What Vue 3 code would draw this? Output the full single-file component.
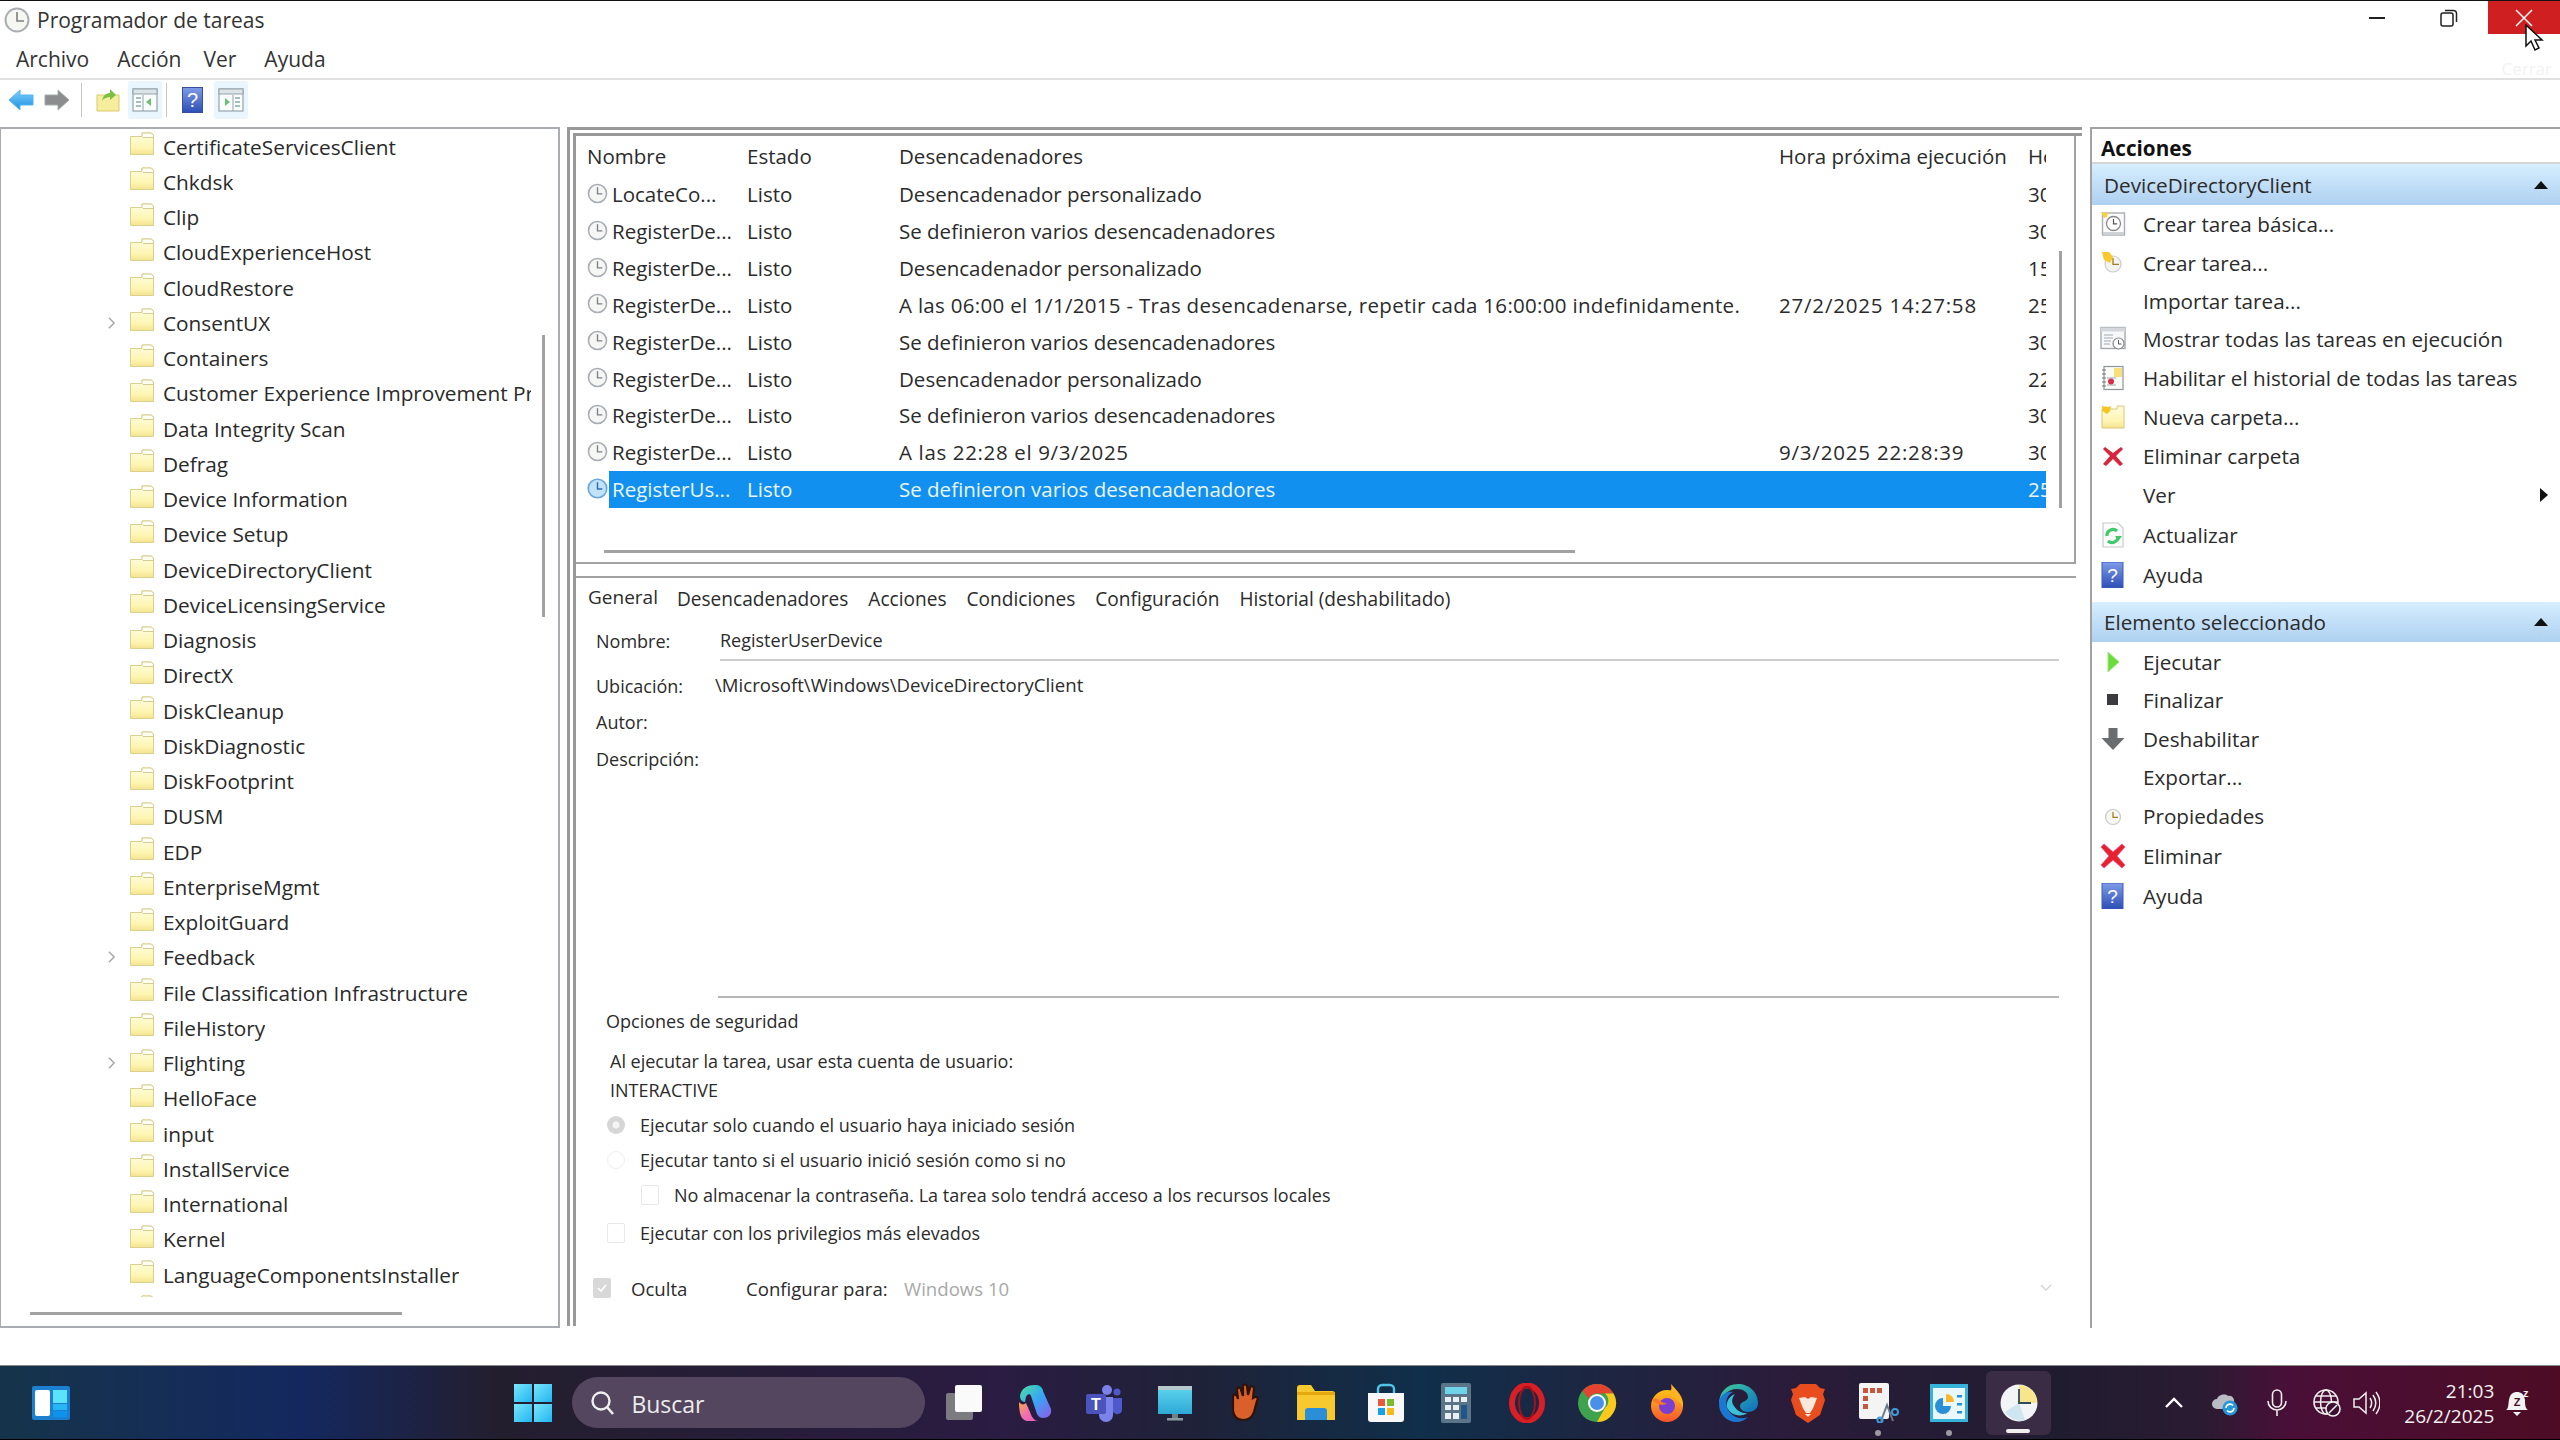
<script setup>
const tree = [
  ['CertificateServicesClient'], ['Chkdsk'], ['Clip'], ['CloudExperienceHost'], ['CloudRestore'], ['ConsentUX', 1], ['Containers'],
  ['Customer Experience Improvement Pr'], ['Data Integrity Scan'], ['Defrag'], ['Device Information'], ['Device Setup'],
  ['DeviceDirectoryClient'], ['DeviceLicensingService'], ['Diagnosis'], ['DirectX'], ['DiskCleanup'], ['DiskDiagnostic'],
  ['DiskFootprint'], ['DUSM'], ['EDP'], ['EnterpriseMgmt'], ['ExploitGuard'], ['Feedback', 1], ['File Classification Infrastructure'],
  ['FileHistory'], ['Flighting', 1], ['HelloFace'], ['input'], ['InstallService'], ['International'], ['Kernel'],
  ['LanguageComponentsInstaller'], ['']
]
const varios = 'Se definieron varios desencadenadores'
const custom = 'Desencadenador personalizado'
const rows = [
  ['LocateCo...', custom, '', '30', ''],
  ['RegisterDe...', varios, '', '30', ''],
  ['RegisterDe...', custom, '', '15', ''],
  ['RegisterDe...', 'A las 06:00 el 1/1/2015 - Tras desencadenarse, repetir cada 16:00:00 indefinidamente.', '27/2/2025 14:27:58', '25', 'long'],
  ['RegisterDe...', varios, '', '30', ''],
  ['RegisterDe...', custom, '', '22', ''],
  ['RegisterDe...', varios, '', '30', ''],
  ['RegisterDe...', 'A las 22:28 el 9/3/2025', '9/3/2025 22:28:39', '30', 'short'],
  ['RegisterUs...', varios, '', '25', '']
]
const tabs = ['Desencadenadores', 'Acciones', 'Condiciones', 'Configuración', 'Historial (deshabilitado)']
const actions1 = [
  { t: 'Crear tarea básica...', i: 'a-basic', h: 38 },
  { t: 'Crear tarea...', i: 'a-create', h: 39 },
  { t: 'Importar tarea...', h: 38 },
  { t: 'Mostrar todas las tareas en ejecución', i: 'a-running', h: 38 },
  { t: 'Habilitar el historial de todas las tareas', i: 'a-history', h: 39 },
  { t: 'Nueva carpeta...', i: 'a-newfolder', h: 39 },
  { t: 'Eliminar carpeta', i: 'a-x', h: 39 },
  { t: 'Ver', arrow: true, h: 40 },
  { t: 'Actualizar', i: 'a-refresh', h: 40 },
  { t: 'Ayuda', i: 'a-help', h: 40 }
]
const actions2 = [
  { t: 'Ejecutar', i: 'a-play', h: 39 },
  { t: 'Finalizar', i: 'a-stop', h: 38 },
  { t: 'Deshabilitar', i: 'a-down', h: 39 },
  { t: 'Exportar...', h: 38 },
  { t: 'Propiedades', i: 'a-props', h: 40 },
  { t: 'Eliminar', i: 'a-xbig', h: 40 },
  { t: 'Ayuda', i: 'a-help', h: 40 }
]
</script>

<template>
  <div class="screen">
    <svg class="defs" width="0" height="0">
      <defs>
        <linearGradient id="gf" x1="0" y1="0" x2="0" y2="1"><stop offset="0" stop-color="#fffde0" /><stop offset=".7" stop-color="#fdf5b0" /><stop offset="1" stop-color="#f3e390" /></linearGradient>
        <linearGradient id="gs" x1="0" y1="0" x2="1" y2="1"><stop offset="0" stop-color="#7be6fb" /><stop offset="1" stop-color="#1fb5f2" /></linearGradient>
        <linearGradient id="gb" x1="0" y1="0" x2="0" y2="1"><stop offset="0" stop-color="#7fd0ff" /><stop offset="1" stop-color="#1f8fe0" /></linearGradient>
        <linearGradient id="gm" x1="0" y1="0" x2="0" y2="1"><stop offset="0" stop-color="#5fd7ef" /><stop offset="1" stop-color="#2ea8d6" /></linearGradient>
        <linearGradient id="gh" x1="0" y1="0" x2="0" y2="1"><stop offset="0" stop-color="#7f9be8" /><stop offset="1" stop-color="#2d4fb5" /></linearGradient>
        <linearGradient id="gc1" x1="0" y1="0" x2="1" y2="1"><stop offset="0" stop-color="#4de0a0" /><stop offset=".5" stop-color="#38a5f5" /><stop offset="1" stop-color="#8f5be8" /></linearGradient>
        <linearGradient id="gc2" x1="0" y1="0" x2="1" y2="1"><stop offset="0" stop-color="#f9b03f" /><stop offset=".5" stop-color="#f070b0" /><stop offset="1" stop-color="#e85ac0" /></linearGradient>
        <linearGradient id="gff" x1="0" y1="0" x2="0" y2="1"><stop offset="0" stop-color="#ffc21a" /><stop offset="1" stop-color="#f5532d" /></linearGradient>
        <linearGradient id="ge" x1="0" y1="0" x2="1" y2="1"><stop offset="0" stop-color="#3ecf9b" /><stop offset="1" stop-color="#0c6cc4" /></linearGradient>
        <symbol id="clk" viewBox="0 0 20 20"><circle cx="10" cy="10" r="8.6" fill="#f6f6f4" stroke="#a8adb4" stroke-width="1.5" /><path d="M10 4v6.4h4.6" fill="none" stroke="#7c8088" stroke-width="1.3" /></symbol>
        <symbol id="clk-sel" viewBox="0 0 20 20"><circle cx="10" cy="10" r="8.8" fill="#c2e2fa" stroke="#6ca8dc" stroke-width="1.6" /><path d="M10 4v6.4h4.6" fill="none" stroke="#2e6fb2" stroke-width="1.4" /></symbol>
        <symbol id="folder" viewBox="0 0 24 23"><path d="M.5 4.500H12V1h9l2.500 2v19.500H.5z" fill="url(#gf)" stroke="#dcd08e" stroke-width="1" /><path d="M12 4.500V1h9l2.500 2v2.500H13" fill="#fffef2" stroke="#d6cb92" stroke-width="1" /></symbol>
        <symbol id="a-basic" viewBox="0 0 26 26"><rect x="2.5" y="2" width="22" height="22" fill="#fbfbfb" stroke="#aaaeb3" stroke-width="1.4" /><circle cx="13.5" cy="12.5" r="7" fill="#fff" stroke="#888" stroke-width="1.3" /><path d="M13.5 8v4.8h3.600" fill="none" stroke="#555" stroke-width="1.2" /><path d="M1 1l5 1 2-1-1 5-3 1z" fill="#f7d23a" /><rect x="3" y="21" width="21" height="2.5" fill="#d0d3d6" /></symbol>
        <symbol id="a-create" viewBox="0 0 26 26"><circle cx="13" cy="14" r="8" fill="#f4f4ee" stroke="#c9cbce" stroke-width="1.2" /><path d="M13 8v6.400h6" fill="none" stroke="#a77b1b" stroke-width="1.3" /><path d="M2 2h7l4 5-3 6-6-3z" fill="#f7c92e" /></symbol>
        <symbol id="a-running" viewBox="0 0 26 26"><rect x="1" y="1.5" width="24" height="21" fill="#f7f8f9" stroke="#9fa5ab" stroke-width="1.3" /><rect x="1" y="1.5" width="24" height="4" fill="#d4d8dc" /><path d="M4 9h9M4 12h9M4 15h7M4 18h6" stroke="#a5aab0" stroke-width="1.2" /><circle cx="18.5" cy="17.5" r="5.5" fill="#fff" stroke="#888" stroke-width="1.2" /><path d="M18.5 14v4h3" fill="none" stroke="#555" stroke-width="1" /></symbol>
        <symbol id="a-history" viewBox="0 0 26 26"><rect x="4" y="1.500" width="19" height="23" fill="#fbfbf7" stroke="#8e959c" stroke-width="1.2" /><path d="M2 5h4M2 9h4M2 13h4M2 17h4M2 21h4" stroke="#777" stroke-width="1.2" /><path d="M14 3h8v9h-8z" fill="#f7e07a" /><path d="M7 13h9M7 20h9" stroke="#9aa" stroke-width="1" /><circle cx="11" cy="16.500" r="3" fill="#d62f4c" /></symbol>
        <symbol id="a-newfolder" viewBox="0 0 26 26"><path d="M2 5h15V2h7v22H2z" fill="url(#gf)" stroke="#d9c877" stroke-width="1" /><path d="M2 2l6 1 3-1-1 5-3 3-5-3z" fill="#f5c623" /></symbol>
        <symbol id="a-x" viewBox="0 0 26 26"><path d="M5 4l8 6 8-6 2 2-7 7 7 8-3 2-7-7-7 7-3-2 7-8-7-7z" fill="#d8243c" /></symbol>
        <symbol id="a-xbig" viewBox="0 0 26 26"><path d="M4 1l9 8 9-8 3 3-8 9 8 9-3 3-9-8-9 8-3-3 8-9-8-9z" fill="#e5232f" stroke="#f38" stroke-width=".6" /></symbol>
        <symbol id="a-refresh" viewBox="0 0 26 26"><path d="M3 1h15l5 5v19H3z" fill="#fbfbfb" stroke="#c7cacc" stroke-width="1.2" /><path d="M7 14a6 6 0 0 1 10-5M18 14a6 6 0 0 1-10 5" fill="none" stroke="#3ec96b" stroke-width="3.200" /><path d="M15 14h7l-3.500 5z" fill="#3ec96b" /></symbol>
        <symbol id="a-help" viewBox="0 0 26 26"><rect x="2" y="0" width="21" height="26" fill="url(#gh)" stroke="#3a5dbd" stroke-width="1" /><text x="12.500" y="20" text-anchor="middle" font-size="19" font-family="Liberation Sans" fill="#fff">?</text></symbol>
        <symbol id="a-play" viewBox="0 0 26 26"><path d="M8 3l11 10-11 10z" fill="#6edb3c" stroke="#9be87a" stroke-width="1" /></symbol>
        <symbol id="a-stop" viewBox="0 0 26 26"><rect x="7" y="7" width="11" height="11" fill="#3b3b3d" /></symbol>
        <symbol id="a-down" viewBox="0 0 26 26"><path d="M8.500 2h9v10h7L13 24 1.500 12h7z" fill="#6a6c6e" /></symbol>
        <symbol id="a-props" viewBox="0 0 26 26"><circle cx="13" cy="14" r="7.500" fill="#f6f6f2" stroke="#c7cacc" stroke-width="1.2" /><path d="M13 9v5.400h5" fill="none" stroke="#a08023" stroke-width="1.300" /></symbol>
      </defs>
    </svg>

    <header class="titlebar">
      <svg class="app-ic" viewBox="0 0 26 26"><circle cx="13" cy="13" r="11.500" fill="#f7f7f2" stroke="#a9adb2" stroke-width="2" /><path d="M13 5v9h7" fill="none" stroke="#7b7f84" stroke-width="1.600" /></svg>
      <span class="title">Programador de tareas</span>
      <div class="wins">
        <span class="win"><i class="min"></i></span>
        <span class="win"><svg viewBox="0 0 18 18" width="18" height="18"><rect x="1" y="4" width="12" height="13" rx="2" fill="none" stroke="#222" stroke-width="1.500" /><path d="M5 1.500h8a3 3 0 0 1 3.500 3V13" fill="none" stroke="#222" stroke-width="1.500" /></svg></span>
        <span class="win close"><svg viewBox="0 0 18 18" width="18" height="18"><path d="M1 1l16 16M17 1L1 17" stroke="#fff" stroke-width="1.500" /></svg></span>
      </div>
      <svg class="cursor" viewBox="0 0 20 28"><path d="M1 1v21l5-5 4 9 4-2-4-8h7z" fill="#fff" stroke="#111" stroke-width="1.500" /></svg>
      <span class="tip">Cerrar</span>
    </header>

    <nav class="menubar">
      <span>Archivo</span><span>Acción</span><span>Ver</span><span>Ayuda</span>
    </nav>

    <div class="toolbar">
      <svg class="tb back" viewBox="0 0 26 24"><path d="M1 12L12 2v5h13v10H12v5z" fill="url(#gb)" stroke="#52b4ef" stroke-width="1" /></svg>
      <svg class="tb fwd" viewBox="0 0 26 24"><path d="M25 12L14 2v5H1v10h13v5z" fill="#8b8d8f" stroke="#a8aaac" stroke-width="1" /></svg>
      <i class="tsep"></i>
      <svg class="tb up" viewBox="0 0 24 24"><path d="M1 7h22v16H1z" fill="#f6ee9c" stroke="#dcc86a" stroke-width="1" /><path d="M6 13C7 7 11 5 14 5V1l6 6-6 5V9c-3 0-6 1-8 4z" fill="#7ac043" /></svg>
      <span class="tbtn t1"><svg viewBox="0 0 26 26" width="26" height="26"><rect x="1" y="2" width="24" height="22" fill="#fbfdfd" stroke="#93a3ab" stroke-width="1.200" /><rect x="1" y="2" width="24" height="5" fill="#dde4e8" stroke="#93a3ab" stroke-width="1" /><path d="M4 11h5M4 15h5M4 19h5" stroke="#8aa" stroke-width="1.400" /><path d="M11 8v16" stroke="#93a3ab" /><path d="M19 11v8l-5-4z" fill="#6cbf73" /></svg></span>
      <i class="tsep s2"></i>
      <svg class="tb help" viewBox="0 0 21 26"><rect x=".5" y=".5" width="20" height="25" fill="url(#gh)" stroke="#35509f" /><text x="10.500" y="20" text-anchor="middle" font-size="20" font-family="Liberation Sans" fill="#fff">?</text></svg>
      <span class="tbtn t2"><svg viewBox="0 0 26 26" width="26" height="26"><rect x="1" y="2" width="24" height="22" fill="#fbfdfd" stroke="#93a3ab" stroke-width="1.200" /><rect x="1" y="2" width="24" height="5" fill="#dde4e8" stroke="#93a3ab" stroke-width="1" /><path d="M17 11h5M17 15h5M17 19h5" stroke="#8aa" stroke-width="1.400" /><path d="M15 8v16" stroke="#93a3ab" /><path d="M7 11v8l5-4z" fill="#6cbf73" /></svg></span>
    </div>

    <main class="main">
      <section class="tree-pane">
        <div class="tree">
          <div v-for="(n, i) in tree" :key="i" class="tree-row">
            <span class="chev"><svg v-if="n[1]" viewBox="0 0 10 16" width="9" height="14"><path d="M2 2l6 6-6 6" fill="none" stroke="#a4a4a4" stroke-width="1.600" /></svg></span>
            <svg class="fold" viewBox="0 0 24 23"><use href="#folder" /></svg>
            <span class="tree-name">{{ n[0] }}</span>
          </div>
        </div>
        <i class="vbar tree-v"></i>
        <i class="hbar tree-h"></i>
      </section>

      <section class="center">
        <div class="upper">
          <div class="tbl-row head">
            <span class="c-n">Nombre</span><span class="c-e">Estado</span><span class="c-t">Desencadenadores</span><span class="c-h">Hora próxima ejecución</span><span class="c-x">Hora</span>
          </div>
          <div v-for="(r, i) in rows" :key="i" class="tbl-row" :class="{ sel: i === 8 }">
            <svg class="clk" viewBox="0 0 20 20"><use :href="i === 8 ? '#clk-sel' : '#clk'" /></svg>
            <div class="cells">
              <span class="c-n2">{{ r[0] }}</span><span class="c-e">Listo</span><span class="c-t" :class="r[4]">{{ r[1] }}</span><span class="c-h date">{{ r[2] }}</span><span class="c-x">{{ r[3] }}0</span>
            </div>
          </div>
          <i class="vbar up-v"></i>
          <i class="hbar up-h"></i>
        </div>

        <div class="lower">
          <div class="tabs">
            <span class="tab first">General</span>
            <span v-for="t in tabs" :key="t" class="tab">{{ t }}</span>
          </div>
          <div class="form">
            <div class="f-row f-name"><span class="lab w1">Nombre:</span><span class="val grow">RegisterUserDevice</span></div>
            <div class="f-row f-loc"><span class="lab w2">Ubicación:</span><span class="val up2">\Microsoft\Windows\DeviceDirectoryClient</span></div>
            <div class="f-row f-aut"><span class="lab">Autor:</span></div>
            <div class="f-row f-des"><span class="lab">Descripción:</span></div>
            <div class="desc-box"></div>
            <div class="sec">
              <div class="s-title">Opciones de seguridad</div>
              <div class="s-run">Al ejecutar la tarea, usar esta cuenta de usuario:</div>
              <div class="s-user">INTERACTIVE</div>
              <div class="opt o1"><i class="radio on"></i>Ejecutar solo cuando el usuario haya iniciado sesión</div>
              <div class="opt o2"><i class="radio"></i>Ejecutar tanto si el usuario inició sesión como si no</div>
              <div class="opt o3"><i class="chk"></i>No almacenar la contraseña. La tarea solo tendrá acceso a los recursos locales</div>
              <div class="opt o4"><i class="chk"></i>Ejecutar con los privilegios más elevados</div>
              <div class="bottom">
                <i class="chk on"><svg viewBox="0 0 12 12" width="12" height="12"><path d="M2 6l3 3 5-6" fill="none" stroke="#fff" stroke-width="1.600" /></svg></i>
                <span class="hid">Oculta</span>
                <span class="cfg">Configurar para:</span>
                <span class="win10">Windows 10</span>
                <svg class="dd" viewBox="0 0 12 8" width="12" height="8"><path d="M1 1l5 5 5-5" fill="none" stroke="#d4d4d4" stroke-width="1.400" /></svg>
              </div>
            </div>
          </div>
        </div>
      </section>

      <aside class="actions">
        <div class="act-title">Acciones</div>
        <div class="act-head"><span>DeviceDirectoryClient</span><i class="tri"></i></div>
        <div v-for="a in actions1" :key="a.t" class="act" :style="{ height: a.h + 'px' }">
          <span class="act-ic"><svg v-if="a.i" viewBox="0 0 26 26" width="26" height="26"><use :href="'#' + a.i" /></svg></span>
          <span>{{ a.t }}</span>
          <i v-if="a.arrow" class="tri-r"></i>
        </div>
        <div class="act-head h2"><span>Elemento seleccionado</span><i class="tri"></i></div>
        <div v-for="a in actions2" :key="a.t" class="act" :style="{ height: a.h + 'px' }">
          <span class="act-ic"><svg v-if="a.i" viewBox="0 0 26 26" width="26" height="26"><use :href="'#' + a.i" /></svg></span>
          <span>{{ a.t }}</span>
        </div>
      </aside>
    </main>

    <footer class="taskbar">
      <svg class="widgets" viewBox="0 0 38 34"><rect width="38" height="34" rx="2" fill="#1d7fd0" /><rect x="3" y="4" width="15" height="26" rx="2" fill="#fff" /><rect x="21" y="4" width="14" height="13" fill="#5be3fb" /><rect x="21" y="18" width="14" height="6" fill="#27b6f5" /><rect x="21" y="25" width="14" height="6" fill="#0d93ee" /></svg>
      <span class="slot start"><svg viewBox="0 0 38 38" width="38" height="38"><rect width="18" height="18" fill="url(#gs)" /><rect x="20" width="18" height="18" fill="url(#gs)" /><rect y="20" width="18" height="18" fill="url(#gs)" /><rect x="20" y="20" width="18" height="18" fill="url(#gs)" /></svg></span>
      <div class="search">
        <svg viewBox="0 0 26 26" width="26" height="26"><circle cx="11" cy="11" r="8.500" fill="none" stroke="#eee" stroke-width="2.400" /><path d="M17 17l6 7" stroke="#eee" stroke-width="2.600" /></svg>
        <span>Buscar</span>
      </div>
      <div class="apps">
        <span class="slot"><svg viewBox="0 0 40 40" width="40" height="40"><rect x="2" y="10" width="27" height="27" rx="2" fill="#7b7b80" /><rect x="11" y="2" width="27" height="27" rx="2" fill="#fafafa" /></svg></span>
        <span class="slot"><svg viewBox="0 0 40 40" width="40" height="40"><path d="M6 13C7 5 14 2 21 2c4 0 7 2 8 6l8 18c1 6-3 9-8 9-4 0-6-3-7-7L17 13c-1-3-4-2-5 1l-1 5c-3 0-5-3-5-6z" fill="url(#gc1)" /><path d="M5 19c2 3 5 3 7 1l4 9c2 6 5 9 8 9H14C7 38 5 30 5 19z" fill="url(#gc2)" /><path d="M21 2c4 0 7 2 8 6l-3-2c-2-1-3-1-5-4z" fill="#1ec0d8" /></svg></span>
        <span class="slot"><svg viewBox="0 0 40 40" width="40" height="40"><circle cx="23" cy="7" r="5" fill="#7b83eb" /><circle cx="33" cy="9" r="3.500" fill="#5059c9" /><path d="M15 14h14v18a7 7 0 0 1-14 0z" fill="#7b83eb" /><path d="M29 15h9v12a5 5 0 0 1-9 2z" fill="#5059c9" /><rect x="2" y="11" width="20" height="20" rx="2" fill="#4b53bc" /><text x="12" y="27" text-anchor="middle" font-size="16" font-weight="700" font-family="Liberation Sans" fill="#fff">T</text></svg></span>
        <span class="slot"><svg viewBox="0 0 40 40" width="40" height="40"><rect x="3" y="3" width="34" height="28" fill="url(#gm)" /><rect x="3" y="3" width="34" height="4" fill="#b5c9cd" /><rect x="17" y="31" width="6" height="4" fill="#6f8087" /><rect x="12" y="35" width="16" height="2.500" fill="#8b9aa0" /></svg></span>
        <span class="slot"><svg viewBox="0 0 40 40" width="40" height="40"><path d="M8 14c0-3 3-3 4-1l1 3-1-9c0-3 4-3 4 0l2 6V3c0-2 4-2 4 0l1 9 2-7c1-3 4-2 4 1l-1 9 2-1c3-1 3 2 2 4l-3 11c-2 6-6 8-11 8-6 0-9-3-10-9z" fill="#d9602a" stroke="#2e1206" stroke-width="2.200" /></svg></span>
        <span class="slot"><svg viewBox="0 0 40 40" width="40" height="40"><path d="M1 5a3 3 0 0 1 3-3h11l4 6h17a3 3 0 0 1 3 3v26H1z" fill="#f8c92f" /><path d="M1 9h38v3H1z" fill="#e5a90f" /><path d="M12 25h16a3 3 0 0 1 3 3v9H9v-9a3 3 0 0 1 3-3z" fill="#2a8fd6" /></svg></span>
        <span class="slot"><svg viewBox="0 0 40 40" width="40" height="40"><path d="M12 11V6a4 4 0 0 1 4-4h8a4 4 0 0 1 4 4v5" fill="none" stroke="#4fc3e8" stroke-width="2.400" /><path d="M2 10h36v26a3 3 0 0 1-3 3H5a3 3 0 0 1-3-3z" fill="#f8f8f8" /><rect x="12" y="16" width="7" height="7" fill="#e8573f" /><rect x="21" y="16" width="7" height="7" fill="#7bbb2e" /><rect x="12" y="25" width="7" height="7" fill="#19a1e6" /><rect x="21" y="25" width="7" height="7" fill="#fbb919" /></svg></span>
        <span class="slot"><svg viewBox="0 0 30 40" width="30" height="40"><rect width="30" height="40" rx="2" fill="#5c7488" /><rect x="4" y="4" width="22" height="7" fill="#6fd3ea" /><g fill="#e8eef2"><rect x="4" y="14" width="6" height="5" /><rect x="12" y="14" width="6" height="5" /><rect x="20" y="14" width="6" height="5" /><rect x="4" y="22" width="6" height="5" /><rect x="12" y="22" width="6" height="5" /><rect x="4" y="30" width="6" height="6" /><rect x="12" y="30" width="6" height="6" /></g><rect x="20" y="22" width="6" height="14" fill="#20578a" /></svg></span>
        <span class="slot"><svg viewBox="0 0 36 40" width="36" height="40"><ellipse cx="18" cy="20" rx="15" ry="17.500" fill="none" stroke="#d81f26" stroke-width="6" /><ellipse cx="18" cy="20" rx="8" ry="16" fill="none" stroke="#a7101a" stroke-width="2" /></svg></span>
        <span class="slot"><svg viewBox="0 0 40 40" width="40" height="40"><circle cx="20" cy="20" r="19" fill="#3fa34d" /><path d="M20 1a19 19 0 0 1 16.500 9.500H20a9.500 9.500 0 0 0-8.500 5L5.500 8A19 19 0 0 1 20 1z" fill="#e4432f" /><path d="M36.500 10.500A19 19 0 0 1 20 39l8-14a9.500 9.500 0 0 0 0-14.500z" fill="#fbc91b" /><circle cx="20" cy="20" r="9" fill="#fff" /><circle cx="20" cy="20" r="7" fill="#4a90e8" /></svg></span>
        <span class="slot"><svg viewBox="0 0 40 40" width="40" height="40"><circle cx="20" cy="23" r="16" fill="url(#gff)" /><path d="M24 1c6 7 13 12 12 23-4-7-10-10-15-12 3-3 4-6 3-11z" fill="#ffb31f" /><circle cx="20" cy="23" r="8" fill="#7a3ed0" /><path d="M5 17c3-2 5-2 7 0 2 3 6 2 8 4-6 2-11 0-15-4z" fill="#f9791f" /></svg></span>
        <span class="slot"><svg viewBox="0 0 42 40" width="42" height="40"><path d="M21 1C32 1 41 9 41 20c0 6-5 9-10 9s-8-3-8-6c0-5 8-4 8-9C31 9 26 6 20 6 11 6 4 13 2 21 2 10 9 1 21 1z" fill="url(#ge)" /><path d="M2 21c0-9 8-13 14-12-6 3-8 9-6 15 2 8 12 14 21 10-3 3-7 5-12 5C10 39 2 31 2 21z" fill="#1b77d2" /><path d="M10 24c-1-5 2-11 8-13-3 4-4 8-1 12 3 5 9 8 14 7-8 5-18 2-21-6z" fill="#38c1d8" /></svg></span>
        <span class="slot"><svg viewBox="0 0 36 40" width="36" height="40"><path d="M10 1h16l4 4 5 1-2 5 2 6-5 15-12 8-12-8L1 17l2-6-2-5 5-1z" fill="#e94d1d" /><path d="M9 15l6-1 3 2 3-2 6 1-3 8-2 4-2 3h-4l-2-3-2-4z" fill="#fbe8dd" /><path d="M15 31h6l-3 3z" fill="#fbe8dd" /></svg></span>
        <span class="slot dot"><svg viewBox="0 0 40 40" width="40" height="40"><rect x="0" y="0" width="30" height="36" rx="2" fill="#f4f4f4" /><g fill="#c7563f"><rect x="4" y="5" width="5" height="5" /><rect x="11" y="5" width="5" height="5" /><rect x="18" y="5" width="5" height="5" /><rect x="4" y="13" width="5" height="5" /><rect x="4" y="21" width="5" height="5" /></g><path d="M22 38l6-16 6 16" fill="none" stroke="#6b7a88" stroke-width="2" /><circle cx="21" cy="37" r="2.600" fill="none" stroke="#3f9ad8" stroke-width="2" /><circle cx="36" cy="29" r="3" fill="none" stroke="#3f9ad8" stroke-width="2" /></svg></span>
        <span class="slot dot"><svg viewBox="0 0 40 40" width="40" height="40"><rect x="1" y="1" width="38" height="38" fill="#36b3d9" /><rect x="4" y="5" width="32" height="31" fill="#e9f7fb" /><path d="M14 15a8 8 0 1 0 8 8h-8z" fill="#2a8fd6" /><path d="M17 11a8 8 0 0 1 8 8h-8z" fill="#f8b62b" /><rect x="28" y="12" width="5" height="2.500" fill="#2a8fd6" /><rect x="28" y="20" width="5" height="2.500" fill="#2a8fd6" /><rect x="28" y="28" width="5" height="2.500" fill="#2a8fd6" /></svg></span>
        <span class="slot active"><svg viewBox="0 0 38 38" width="38" height="38"><circle cx="19" cy="19" r="18.500" fill="#f2f4f5" /><path d="M19 1a18 18 0 0 1 18 18H19z" fill="#f8e58c" /><path d="M5 28a18 18 0 0 0 20 8L19 19z" fill="#cfe6f0" /><path d="M19 5v14h12" fill="none" stroke="#2d4b5c" stroke-width="1.800" /></svg><i class="bar"></i></span>
      </div>
      <div class="tray">
        <svg class="tr a" viewBox="0 0 20 12" width="20" height="12"><path d="M2 10l8-8 8 8" fill="none" stroke="#fff" stroke-width="2.400" /></svg>
        <svg class="tr b" viewBox="0 0 28 26" width="28" height="26"><path d="M6 19a5 5 0 0 1 0-10c1-4 8-6 11-3 4-1 7 3 6 7H15v6z" fill="#b9bcc4" /><circle cx="19" cy="18" r="7.500" fill="#2596d6" /><path d="M15 18a4 4 0 0 1 7-2.500M23 18a4 4 0 0 1-7 2.500" fill="none" stroke="#fff" stroke-width="1.600" /></svg>
        <svg class="tr c" viewBox="0 0 22 28" width="22" height="28"><rect x="6.500" y="1" width="9" height="17" rx="4.500" fill="none" stroke="#eee" stroke-width="1.600" /><path d="M2 12a9 9 0 0 0 18 0M11 21v6" fill="none" stroke="#eee" stroke-width="1.600" /></svg>
        <svg class="tr d" viewBox="0 0 28 28" width="28" height="28"><circle cx="13" cy="13" r="12" fill="none" stroke="#eee" stroke-width="1.600" /><ellipse cx="13" cy="13" rx="5.500" ry="12" fill="none" stroke="#eee" stroke-width="1.500" /><path d="M1 13h24M3 7h20M3 19h12" stroke="#eee" stroke-width="1.500" /><circle cx="20" cy="20" r="7" fill="#3c1030" stroke="#eee" stroke-width="1.600" /><path d="M16 24l8-8" stroke="#eee" stroke-width="1.600" /></svg>
        <svg class="tr e" viewBox="0 0 28 26" width="28" height="26"><path d="M2 9h5l7-6v20l-7-6H2z" fill="none" stroke="#eee" stroke-width="1.500" /><path d="M18 8c2 3 2 7 0 10M21 5c3.500 5 3.500 11 0 16M24 2c5 7 5 15 0 22" fill="none" stroke="#eee" stroke-width="1.500" /></svg>
        <div class="clock"><span>21:03</span><span>26/2/2025</span></div>
        <svg class="tr f" viewBox="0 0 24 30" width="24" height="30"><path d="M1 22c3-2 2-6 3-10 1-6 4-8 8-8s7 2 8 8c0 4 0 8 3 10z" fill="#f2f2f2" /><path d="M8 24h8l-4 4z" fill="#f2f2f2" /><text x="12" y="18" text-anchor="middle" font-size="11" font-family="Liberation Sans" font-weight="700" fill="#4d0c24">Z</text><text x="18" y="9" font-size="11" font-family="Liberation Sans" font-weight="700" fill="#f2f2f2">z</text></svg>
      </div>
    </footer>
  </div>
</template>

<style>
html, body { margin: 0; padding: 0; background: #fff; }
</style>

<style scoped>
.screen { width: 2560px; height: 1440px; overflow: hidden; display: flex; flex-direction: column; background: #fff; color: #2b2b2b; font-family: "Open Sans", "Noto Sans", sans-serif; font-size: 20px; }
.defs { position: absolute; }
i { display: block; font-style: normal; }

.titlebar { height: 38px; flex: none; display: flex; align-items: center; border-top: 1px solid #111; padding-left: 4px; position: relative; }
.app-ic { width: 26px; height: 26px; margin-right: 7px; }
.title { font-size: 21px; color: #333; }
.wins { margin-left: auto; display: flex; align-self: flex-start; }
.win { width: 72px; height: 33px; display: flex; align-items: center; justify-content: center; }
.min { width: 16px; height: 2px; background: #222; }
.win.close { background: #d01f21; margin-left: 3px; }
.cursor { position: absolute; right: 15px; top: 23px; width: 20px; height: 28px; }
.tip { position: absolute; right: 8px; top: 56px; font-size: 17px; color: #f2f2f2; z-index: 1; }

.menubar { height: 39px; flex: none; display: flex; align-items: center; padding-left: 16px; border-bottom: 2px solid #e0e0e0; font-size: 21px; color: #333; }
.menubar span { margin-right: 28px; }
.menubar span:nth-child(2) { margin-right: 22px; }

.toolbar { height: 47px; box-sizing: border-box; padding-bottom: 8px; flex: none; display: flex; align-items: center; padding-left: 8px; }
.tb { flex: none; }
.back, .fwd { width: 26px; height: 24px; }
.fwd { margin-left: 10px; }
.tsep { width: 1px; height: 34px; background: #c5c5c5; margin: 0 14px 0 11px; }
.tsep.s2 { margin: 0 15px 0 4px; }
.up { width: 24px; height: 24px; }
.help { width: 21px; height: 26px; }
.tbtn { width: 34px; height: 38px; background: #eaf6fd; display: flex; align-items: center; justify-content: center; border-radius: 3px; }
.t1 { margin-left: 8px; }
.t2 { margin-left: 11px; }

.main { height: 1201px; flex: none; display: flex; }
.tree-pane { width: 560px; height: 1201px; box-sizing: border-box; border: 2px solid #a9adb2; border-left: 1px solid #a9adb2; position: relative; flex: none; }
.tree { height: 1168px; overflow: hidden; font-size: 20.8px; }
.tree-row { height: 35.25px; display: flex; align-items: center; padding-left: 100px; }
.chev { width: 29px; padding-left: 6px; box-sizing: border-box; flex: none; display: flex; }
.fold { width: 24px; height: 23px; flex: none; margin-top: -6px; }
.tree-name { margin-left: 9px; white-space: nowrap; color: #2a2a2a; max-width: 368px; overflow: hidden; }
.vbar, .hbar { position: absolute; background: #a2a2a2; }
.tree-v { left: 541px; top: 206px; width: 3px; height: 282px; }
.tree-h { left: 29px; top: 1183px; width: 372px; height: 3px; }

.center { width: 1515px; margin-left: 7px; flex: none; height: 1199px; box-sizing: border-box; border-top: 9px double #999; border-left: 9px double #999; }
.upper { width: 1500px; height: 428px; box-sizing: border-box; border-right: 2px solid #a2a2a2; border-bottom: 2px solid #a2a2a2; position: relative; font-size: 20.5px; }
.tbl-row { height: 36.85px; display: flex; align-items: center; padding-left: 11px; }
.tbl-row.head { height: 40px; }
.head > span { flex: none; white-space: nowrap; overflow: hidden; }
.head .c-n { width: 160px; }
.head .c-e, .cells .c-e { width: 152px; flex: none; }
.c-t { width: 880px; flex: none; white-space: nowrap; }
.c-t.long { letter-spacing: .3px; }
.c-t.short { letter-spacing: .64px; }
.c-h { width: 249px; flex: none; white-space: nowrap; }
.c-h.date { letter-spacing: .8px; }
.c-x { width: 18px; flex: none; overflow: hidden; white-space: nowrap; }
.clk { width: 21px; height: 21px; flex: none; margin-right: 1px; margin-top: -2px; }
.cells { flex: none; width: 1437px; height: 100%; display: flex; align-items: center; }
.c-n2 { width: 135px; padding-left: 3px; flex: none; white-space: nowrap; }
.sel .cells { background: #1190f0; color: #eaf6ff; }
.up-v { left: 1483px; top: 115px; width: 3px; height: 257px; }
.up-h { left: 28px; top: 414px; width: 971px; height: 3px; }

.lower { margin-top: 12px; width: 1500px; border-top: 2px solid #a2a2a2; }
.tabs { height: 42px; display: flex; align-items: center; padding-left: 12px; font-size: 19.1px; }
.tab { margin-right: 20px; white-space: nowrap; }
.tab.first { margin-right: 19px; margin-top: -4px; font-size: 19px; }
.form { padding-left: 20px; font-size: 18px; }
.f-row { display: flex; align-items: center; }
.f-name { height: 41px; }
.w1 { width: 124px; flex: none; }
.grow { flex: 1; margin-right: 17px; height: 41px; line-height: 40px; border-bottom: 2px solid #ccc; box-sizing: border-box; }
.f-loc { height: 36px; margin-top: 7px; }
.w2 { width: 119px; flex: none; }
.up2 { margin-top: -4px; font-size: 18.6px; }
.f-aut { height: 36px; }
.f-des { height: 38px; }
.desc-box { margin-left: 122px; margin-right: 17px; height: 218px; border-bottom: 2px solid #b6b6b6; }
.sec { margin-left: 10px; font-size: 18px; }
.s-title { height: 46px; line-height: 47px; }
.s-run { height: 34px; line-height: 34px; margin-left: 4px; }
.s-user { height: 24px; line-height: 24px; margin-left: 4px; }
.opt { display: flex; align-items: center; white-space: nowrap; }
.o1 { height: 46px; }
.o2 { height: 24px; }
.o3 { height: 46px; padding-left: 34px; }
.o4 { height: 30px; }
.radio { width: 18px; height: 18px; border-radius: 50%; border: 1px solid #eee; box-sizing: border-box; margin-right: 15px; flex: none; margin-left: 1px; }
.radio.on { background: radial-gradient(circle, #f4f4f4 0 3px, #d6d6d6 4px); border: none; }
.chk { width: 18px; height: 20px; border: 1px solid #e8e8e8; border-radius: 2px; box-sizing: border-box; margin-right: 15px; flex: none; margin-left: 1px; }
.bottom { height: 80px; display: flex; align-items: center; margin-left: -13px; padding-right: 24px; }
.chk.on { background: #d8d8d8; display: flex; align-items: center; justify-content: center; margin: 0 20px 0 0; border: none; }
.bottom .hid { width: 115px; font-size: 18.6px; }
.cfg { width: 158px; font-size: 18.6px; }
.win10 { color: #a8a8a8; font-size: 18.6px; }
.dd { margin-left: auto; }

.actions { flex: 1; height: 1201px; margin-left: 8px; box-sizing: border-box; border-left: 2px solid #a2a2a2; border-top: 2px solid #a2a2a2; font-size: 20.7px; }
.act-title { height: 33px; border-bottom: 2px solid #d5d5d5; padding-left: 9px; font-weight: 700; line-height: 38px; color: #111; }
.act-head { height: 41px; display: flex; align-items: center; justify-content: space-between; padding: 0 12px; background: linear-gradient(#d6eeff, #aed0f0); }
.act-head.h2 { height: 40px; margin-top: 7px; }
.tri { width: 0; height: 0; border-left: 7px solid transparent; border-right: 7px solid transparent; border-bottom: 8px solid #111; }
.tri-r { width: 0; height: 0; border-top: 7px solid transparent; border-bottom: 7px solid transparent; border-left: 8px solid #111; margin-left: auto; margin-right: 12px; }
.act { display: flex; align-items: center; padding-left: 8px; }
.act-ic { width: 26px; height: 26px; margin-right: 17px; flex: none; }

.taskbar { height: 75px; box-sizing: border-box; flex: none; margin-top: 37px; display: flex; align-items: center; padding-left: 32px; position: relative; border-top: 1px solid #888; border-bottom: 1px solid #000; background: linear-gradient(90deg, #15344a 0, #14285f 300px, #231e2e 500px, #2a1c42 1000px, #1e2238 1200px, #102f4a 1420px, #2a1c3a 1780px, #201c30 2060px, #2a1b32 2200px, #4a0f38 2290px, #4d0c24 2560px); }
.widgets { width: 38px; height: 34px; flex: none; }
.slot { width: 70.400px; height: 100%; display: flex; align-items: center; justify-content: center; flex: none; position: relative; }
.start { margin-left: 428px; }
.search { width: 353px; height: 51px; margin-left: 4px; margin-right: 3px; border-radius: 26px; background: #54465f; display: flex; align-items: center; padding-left: 18px; box-sizing: border-box; color: #ececec; font-size: 23px; flex: none; }
.search span { margin-left: 15px; margin-top: 3px; }
.apps { display: flex; height: 100%; flex: none; }
.dot::after { content: ""; position: absolute; left: 32px; bottom: 3px; width: 6px; height: 6px; border-radius: 50%; background: #9a9aa2; }
.active { background: #3a2c45; height: 64px; align-self: center; border-radius: 6px; width: 65px; margin-left: 2px; }
.bar { position: absolute; left: 20px; bottom: 2px; width: 24px; height: 4px; background: #f0f0f0; border-radius: 2px; }
.tray { display: flex; align-items: center; flex: none; color: #f2f2f2; }
.tr { flex: none; }
.tr.a { margin-left: 113px; }
.tr.b { margin-left: 27px; }
.tr.c { margin-left: 27px; }
.tr.d { margin-left: 25px; }
.tr.e { margin-left: 11px; }
.clock { width: 99px; margin-left: 15px; margin-top: 2px; display: flex; flex-direction: column; align-items: flex-end; font-size: 19px; line-height: 25px; }
.tr.f { margin-left: 11px; }
</style>
